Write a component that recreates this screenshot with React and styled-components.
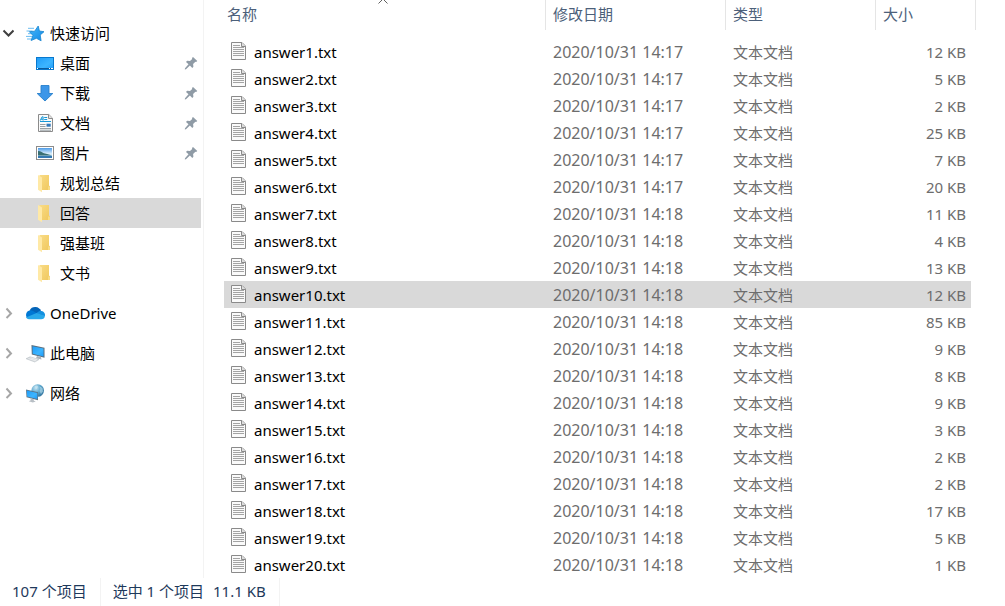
import React, {useState} from "react";
import styled, {createGlobalStyle} from "styled-components";

const GlobalStyle = createGlobalStyle`
    * {
        box-sizing: border-box;
    }
    body {
        margin: 0;
        background: #fff;
        color: #000;
        font-family: "Noto Sans", "Noto Sans CJK SC", sans-serif;
        font-size: 15px;
        line-height: 20px;
    }
    button {
        padding: 0;
        border: 0;
        background: none;
        color: inherit;
        font: inherit;
        cursor: pointer;
    }
`;

const Window = styled.div`
    min-height: 100vh;
    display: flex;
    flex-direction: column;
`;

const Body = styled.div`
    flex: 1;
    display: flex;
`;

const Sidebar = styled.nav`
    flex: 0 0 204px;
    display: flex;
    flex-direction: column;
    gap: 10px;
    padding: 18px 2px 0 0;
    border-right: 1px solid #f3f3f3;
`;

const Group = styled.div`
    display: flex;
    flex-direction: column;
`;

const TreeRow = styled.div`
    height: 30px;
    display: flex;
    align-items: center;
    padding-right: 3px;
    background: ${props => (props.$active ? "#d9d9d9" : "transparent")};
`;

const Toggle = styled.button`
    width: 25px;
    height: 30px;
    padding-left: 2px;
    display: flex;
    align-items: center;
    color: ${props => (props.$open ? "#404040" : "#a6a6a6")};
`;

const TreeLink = styled.a`
    flex: 1;
    display: flex;
    align-items: center;
    gap: 5px;
    padding-left: ${props => (props.$nested ? "35px" : "0")};
    color: inherit;
    text-decoration: none;
    white-space: nowrap;
`;

const Content = styled.main`
    flex: 1;
    min-width: 0;
    padding: 0 29px 0 20px;
`;

const FileTable = styled.table`
    width: 100%;
    table-layout: fixed;
    border-collapse: separate;
    border-spacing: 0;
`;

const Col = styled.col`
    width: ${props => props.$width};
`;

const HeadCell = styled.th`
    position: relative;
    height: 30px;
    padding: 0 0 2px ${props => (props.$first ? "3px" : "7px")};
    border-right: 1px solid #e5e5e5;
    color: #4c607a;
    font-weight: 400;
    text-align: left;
`;

const SortMark = styled.svg`
    position: absolute;
    top: -2px;
    left: calc(50% - 8px);
`;

const Spacer = styled.tbody`
    td {
        height: 8px;
        padding: 0;
    }
`;

const Cell = styled.td`
    height: 27px;
    padding: 0 0 0 7px;
    color: #6d6d6d;
    white-space: nowrap;
`;

const NameCell = styled(Cell)`
    color: #000;
`;

const DateCell = styled(Cell)`
    font-size: 16px;
`;

const SizeCell = styled(Cell)`
    padding-right: 5px;
    border-right: 5px solid transparent;
    background-clip: padding-box;
    text-align: right;
`;

const FileRow = styled.tr`
    ${Cell} {
        background-color: ${props => (props.$selected ? "#d9d9d9" : "transparent")};
    }
`;

const FileName = styled.div`
    display: flex;
    align-items: center;
    gap: 7px;
`;

const StatusBar = styled.footer`
    height: 28px;
    display: flex;
    align-items: stretch;
    color: #1e395b;
`;

const StatusItem = styled.div`
    display: flex;
    gap: 9px;
    padding: 3px 13px 0 12px;
    border-right: 1px solid #f3f3f3;
`;

const Icon = ({size = 20, children}) => (
    <svg width={size} height={size} viewBox={`0 0 ${size} ${size}`} aria-hidden="true">
        {children}
    </svg>
);

const HiddenSvg = styled.svg`
    position: absolute;
`;

const Gradients = () => (
    <HiddenSvg width="0" height="0" aria-hidden="true">
        <defs>
            <linearGradient id="blue" x1="0" y1="0" x2="1" y2="1">
                <stop offset="0" stopColor="#45b8fb" />
                <stop offset="1" stopColor="#1287e4" />
            </linearGradient>
            <linearGradient id="screen" x1="0" y1="0" x2="1" y2="1">
                <stop offset="0" stopColor="#1e9bf8" />
                <stop offset="0.6" stopColor="#3db5ff" />
                <stop offset="1" stopColor="#1e9bf8" />
            </linearGradient>
            <linearGradient id="folder" x1="0" y1="0" x2="1" y2="1">
                <stop offset="0" stopColor="#f9dc86" />
                <stop offset="1" stopColor="#f0c75c" />
            </linearGradient>
            <linearGradient id="sky" x1="0" y1="0" x2="0" y2="1">
                <stop offset="0" stopColor="#4c9be8" />
                <stop offset="0.6" stopColor="#e2f2fb" />
                <stop offset="1" stopColor="#5ba3d6" />
            </linearGradient>
            <radialGradient id="globe" cx="0.35" cy="0.3" r="0.8">
                <stop offset="0" stopColor="#c4e4f3" />
                <stop offset="0.5" stopColor="#5ba6cc" />
                <stop offset="1" stopColor="#2c6d98" />
            </radialGradient>
        </defs>
    </HiddenSvg>
);

const Chevron = ({open}) => (
    <Icon size={12}>
        <path d={open ? "M1.5 3.5L6.500 8.500l5-5" : "M4.500 1.500L9 6.500l-4.500 4.500"} fill="none" stroke="currentColor" strokeWidth="2" />
    </Icon>
);

const PinIcon = () => (
    <Icon size={14}>
        <path
            d="M9 1l4.3 4.1-1.2.9-.7-.2-2.3 2.3.3 2.7-1.1 1.1-2.4-2.3L2 13.2l-1.2.2.2-1.2 3.5-3.9L2 5.9l1.1-1.1 2.9.3L8.2 3 8 2z"
            fill="#8f9ba6"
        />
    </Icon>
);

const StarIcon = () => (
    <Icon>
        <path d="M3 5.3h6M1.500 8h6M3 10.700h5M1 13.400h6M2 16h4" stroke="#6bbcf1" strokeWidth="1" />
        <path
            d="M13.200 3l1.200 5 4.600.7-3.800 3.300.9 5.800-4.700-2.500-5.300 2.200 1.800-5.200L4.400 8.700l5.300-.5z"
            fill="url(#blue)"
            stroke="#1684cf"
            strokeWidth="0.8"
        />
    </Icon>
);

const DesktopIcon = () => (
    <Icon>
        <rect x="1.5" y="4.5" width="17" height="12" fill="url(#screen)" stroke="#0878ce" />
        <path d="M2 15.500h16" stroke="#0b5a9c" />
        <path d="M2 15.500h1M14 15.500h1M16 15.500h2" stroke="#fff" />
    </Icon>
);

const DownloadIcon = () => (
    <Icon>
        <path d="M6 2.500h8v8h3.800L10 18 2.200 10.500H6z" fill="#3c96e8" stroke="#2880cc" strokeWidth="0.9" />
    </Icon>
);

const DocumentIcon = () => (
    <Icon>
        <path d="M3.500 1.500h10.300l3.700 3.700v13.300h-14z" fill="#fafafa" stroke="#8b8b8b" />
        <path d="M13.500 1.500v4h4" fill="#e3e3e3" stroke="#8b8b8b" />
        <path d="M5.200 7.600L7.100 3.800h1v3.800M6 6.200h2M9.200 4.500h3M9.200 6.500h3M5 8.500h11" fill="none" stroke="#1698d8" />
        <path d="M5 11.500h5.500M5 13.500h5.500M5 15.500h11M5 17.200h11" stroke="#8d969c" strokeWidth="0.9" />
        <rect x="11.5" y="10.7" width="4.2" height="3" fill="#3478b8" />
    </Icon>
);

const PictureIcon = () => (
    <Icon>
        <rect x="1.5" y="3.5" width="17" height="13" fill="#fff" stroke="#8c8c8c" />
        <rect x="3" y="5" width="14" height="10" fill="url(#sky)" />
        <path d="M3 8c3 0 4.500 2 7 2.500 3 .5 5 1.500 7 2H3z" fill="#396f72" />
        <path d="M3 13h14v2H3z" fill="#3479b2" />
    </Icon>
);

const FolderIcon = () => (
    <Icon>
        <path d="M4.500 2H14v10.500l1 1V17H4.500z" fill="url(#folder)" />
        <path d="M13 13.500h2V17h-2z" fill="#f8dc85" />
        <path d="M3 2l4 2.500V19.200l-4-2.500z" fill="#ffe9a6" />
    </Icon>
);

const OneDriveIcon = () => (
    <Icon>
        <path d="M4.600 7.400A6.200 6.200 0 0 1 16 8l-4 3.500z" fill="#0364b8" />
        <path d="M3.500 15.800A4.500 4.500 0 0 1 4.600 7.400q2-.2 3.400.6l5.500 3.200-10 5z" fill="#0078d4" />
        <path d="M11.500 10.100c1.600-1.700 3-2.300 5-2.100a4.200 4.200 0 0 1 3.400 5L16 12.700z" fill="#1490df" />
        <path d="M.8 14.500L11.600 10.100l8.300 3a3.800 3.800 0 0 1-3.700 3.200H4.600a4.500 4.500 0 0 1-3.800-1.800z" fill="#28a8ea" />
    </Icon>
);

const ComputerIcon = () => (
    <Icon>
        <path d="M6.500 2L19.500 4.700v10L6.800 11.500z" fill="#5a6d7c" />
        <path d="M7.500 3.200l11 2.300v7.900L7.700 10.700z" fill="url(#screen)" />
        <path d="M12 13l4 1 .5 2.500-5.500-1.300z" fill="#aab3ba" />
        <path d="M1 15.700l4-1.900 9 2.700-4.200 2.500z" fill="#d6dadd" stroke="#b3bac0" strokeWidth="0.5" />
        <path d="M3.500 15.500l7.500 2.400M5.500 14.700l6.700 2.100" stroke="#fff" strokeWidth="0.5" />
    </Icon>
);

const NetworkIcon = () => (
    <Icon>
        <circle cx="12.7" cy="7.5" r="6.3" fill="url(#globe)" />
        <path
            d="M9.500 3c2-1 3.300-.5 3.500.7s-1.500 1.300-1.500 2.500zM14.500 3.500l3 1.500.5 3.500-2 2.500-1.500-3 1-2zM14 1.800l1.800.8"
            fill="#d5edf5"
            opacity="0.5"
        />
        <path d="M1 6.500l12 2.800v8L1.500 14.200z" fill="#5a7488" />
        <path d="M1.800 7.500l10.500 2.500v6L2.200 13.500z" fill="url(#screen)" />
        <path d="M5.500 15.300l3.300.9v1.500l2 .7-3 1-4-1.200 1.900-1z" fill="#b8bfc5" />
    </Icon>
);

const TextFileIcon = () => (
    <svg width="16" height="20" viewBox="0 0 16 20" aria-hidden="true">
        <path d="M.5.5h10.500l3.500 3.500v13.500H.5z" fill="#fafafa" stroke="#8a8a8a" />
        <path d="M10.500.5v4h4" fill="#ddd" stroke="#8a8a8a" />
        <path d="M2 3.500h7M2 5.500h11M2 7.500h11M2 9.500h11M2 11.500h11M2 13.500h11" stroke="#a4a4a4" />
    </svg>
);

const quickLinks = [
    {name: "桌面", icon: DesktopIcon, pinned: true},
    {name: "下载", icon: DownloadIcon, pinned: true},
    {name: "文档", icon: DocumentIcon, pinned: true},
    {name: "图片", icon: PictureIcon, pinned: true},
    {name: "规划总结", icon: FolderIcon},
    {name: "回答", icon: FolderIcon},
    {name: "强基班", icon: FolderIcon},
    {name: "文书", icon: FolderIcon},
];

const roots = [
    {name: "OneDrive", icon: OneDriveIcon},
    {name: "此电脑", icon: ComputerIcon},
    {name: "网络", icon: NetworkIcon},
];

const sizes = [12, 5, 2, 25, 7, 20, 11, 4, 13, 12, 85, 9, 8, 9, 3, 2, 2, 17, 5, 1];

const files = sizes.map((size, index) => ({
    name: `answer${index + 1}.txt`,
    date: index < 6 ? "2020/10/31 14:17" : "2020/10/31 14:18",
    type: "文本文档",
    size: `${size} KB`,
}));

const TreeItem = ({item, nested, active, open, onToggle, onSelect}) => {
    const ItemIcon = item.icon;
    return (
        <TreeRow $active={active}>
            {!nested && (
                <Toggle $open={open} aria-label={item.name} aria-expanded={!!open} onClick={onToggle}>
                    <Chevron open={open} />
                </Toggle>
            )}
            <TreeLink href="#" $nested={nested} onClick={onSelect}>
                <ItemIcon />
                {item.name}
            </TreeLink>
            {item.pinned && <PinIcon />}
        </TreeRow>
    );
};

const App = () => {
    const [open, setOpen] = useState(true);
    const [folder, setFolder] = useState("回答");
    const [selected, setSelected] = useState("answer10.txt");

    return (
        <Window>
            <GlobalStyle />
            <Gradients />
            <Body>
                <Sidebar>
                    <Group>
                        <TreeItem item={{name: "快速访问", icon: StarIcon}} open={open} onToggle={() => setOpen(!open)} />
                        {open &&
                            quickLinks.map(item => (
                                <TreeItem
                                    key={item.name}
                                    item={item}
                                    nested
                                    active={item.name === folder}
                                    onSelect={() => setFolder(item.name)}
                                />
                            ))}
                    </Group>
                    {roots.map(item => (
                        <TreeItem key={item.name} item={item} />
                    ))}
                </Sidebar>
                <Content>
                    <FileTable>
                        <colgroup>
                            <Col />
                            <Col $width="180px" />
                            <Col $width="150px" />
                            <Col $width="100px" />
                        </colgroup>
                        <thead>
                            <tr>
                                <HeadCell $first aria-sort="ascending">
                                    <button>名称</button>
                                    <SortMark width="12" height="7" viewBox="0 0 12 7" aria-hidden="true">
                                        <path d="M1.500 5.500L6 1l4.500 4.500" fill="none" stroke="#606060" />
                                    </SortMark>
                                </HeadCell>
                                <HeadCell>
                                    <button>修改日期</button>
                                </HeadCell>
                                <HeadCell>
                                    <button>类型</button>
                                </HeadCell>
                                <HeadCell>
                                    <button>大小</button>
                                </HeadCell>
                            </tr>
                        </thead>
                        <Spacer aria-hidden="true">
                            <tr>
                                <td colSpan={4} />
                            </tr>
                        </Spacer>
                        <tbody>
                            {files.map(file => (
                                <FileRow
                                    key={file.name}
                                    $selected={file.name === selected}
                                    onClick={() => setSelected(file.name)}
                                >
                                    <NameCell>
                                        <FileName>
                                            <TextFileIcon />
                                            {file.name}
                                        </FileName>
                                    </NameCell>
                                    <DateCell>{file.date}</DateCell>
                                    <Cell>{file.type}</Cell>
                                    <SizeCell>{file.size}</SizeCell>
                                </FileRow>
                            ))}
                        </tbody>
                    </FileTable>
                </Content>
            </Body>
            <StatusBar>
                <StatusItem>107 个项目</StatusItem>
                <StatusItem>
                    <span>选中 1 个项目</span>
                    <span>11.1 KB</span>
                </StatusItem>
            </StatusBar>
        </Window>
    );
};

export default App;
